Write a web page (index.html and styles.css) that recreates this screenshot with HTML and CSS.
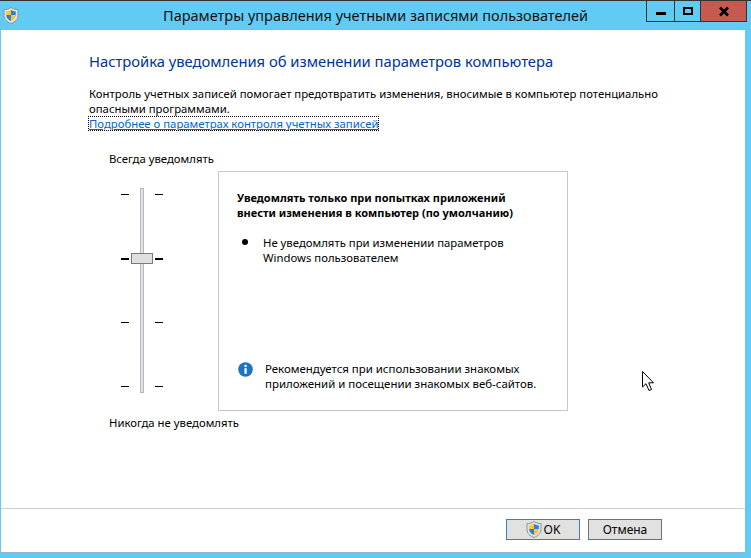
FILE: index.html
```html
<!DOCTYPE html>
<html lang="ru">
<head>
<meta charset="utf-8">
<title>Параметры управления учетными записями пользователей</title>
<link rel="stylesheet" href="styles.css">
</head>
<body>
<svg class="defs" width="0" height="0">
  <defs>
    <symbol id="shield" viewBox="0 0 16 17">
      <path d="M8 .5 C10 2 12.5 2.6 15 2.6 V8.5 C15 12.5 12 15 8 16.5 C4 15 1 12.5 1 8.5 V2.6 C3.5 2.6 6 2 8 .5Z" fill="#dfe3e6" stroke="#8d9499"/>
      <path d="M8 3 C9.5 3.9 11 4.3 12.8 4.4 V8 H8Z" fill="#2f80c8"/>
      <path d="M8 3 C6.5 3.9 5 4.3 3.2 4.4 V8 H8Z" fill="#f6c730"/>
      <path d="M3.2 8 H8 V14 C5.2 13 3.2 11 3.2 8Z" fill="#2f80c8"/>
      <path d="M12.8 8 H8 V14 C10.8 13 12.8 11 12.8 8Z" fill="#f6c730"/>
    </symbol>
  </defs>
</svg>
<div class="window">
  <header class="titlebar">
    <svg class="title-icon"><use href="#shield"/></svg>
    <h1 class="title">Параметры управления учетными записями пользователей</h1>
    <div class="controls">
      <div class="ctl ctl-min"><span class="glyph-min"></span></div>
      <div class="ctl ctl-max"><span class="glyph-max"></span></div>
      <div class="ctl ctl-close"><svg width="14" height="11" viewBox="0 0 14 11"><path d="M3 1.5 L11 9.5 M11 1.5 L3 9.5" stroke="#000" stroke-width="2.6" fill="none"/></svg></div>
    </div>
  </header>
  <div class="client">
    <main class="content">
      <h2 class="heading">Настройка уведомления об изменении параметров компьютера</h2>
      <p class="intro">Контроль учетных записей помогает предотвратить изменения, вносимые в компьютер потенциально опасными программами.</p>
      <a class="link" href="#">Подробнее о параметрах контроля учетных записей</a>
      <div class="label-top">Всегда уведомлять</div>
      <div class="settings">
        <div class="slider">
          <div class="track"></div>
          <div class="ticks">
            <div class="tick-row"><i></i><i></i></div>
            <div class="tick-row sel"><i></i><i></i></div>
            <div class="tick-row"><i></i><i></i></div>
            <div class="tick-row"><i></i><i></i></div>
          </div>
          <div class="thumb"></div>
        </div>
        <section class="panel">
          <div class="panel-title">Уведомлять только при попытках приложений<br>внести изменения в компьютер (по умолчанию)</div>
          <div class="bullet"><span class="dot"></span><span>Не уведомлять при изменении параметров<br>Windows пользователем</span></div>
          <div class="note">
            <svg class="info" width="15" height="15" viewBox="0 0 16 16"><circle cx="8" cy="8" r="7.8" fill="#1a74c4"/><rect x="6.9" y="3" width="2.4" height="2.4" fill="#fff"/><rect x="6.9" y="6.6" width="2.4" height="6" fill="#fff"/></svg>
            <span class="note-text">Рекомендуется при использовании знакомых<br>приложений и посещении знакомых веб-сайтов.</span>
          </div>
        </section>
      </div>
      <div class="label-bottom">Никогда не уведомлять</div>
    </main>
    <footer class="footer">
      <button class="btn btn-default" type="button"><svg class="btn-shield"><use href="#shield"/></svg>OK</button>
      <button class="btn" type="button">Отмена</button>
    </footer>
  </div>
  <svg class="cursor" width="14" height="22" viewBox="0 0 14 22"><path d="M1.5 1.5 V17 L5 13.7 L8 20.5 L10.5 19.5 L7.7 12.8 H12.5Z" fill="#fff" stroke="#000" stroke-width="1"/></svg>
</div>
</body>
</html>
```
FILE: styles.css
```css
* { box-sizing: border-box; }
html, body { margin: 0; padding: 0; }
body { width: 751px; height: 558px; overflow: hidden; font-family: "Noto Sans", "Open Sans", sans-serif; font-size: 11.34px; color: #000; background: #62cbf3; }
.defs { position: absolute; }
.window { position: relative; width: 751px; height: 558px; display: flex; flex-direction: column; background: #62cbf3; border-top: 1px solid #333; }
.titlebar { position: relative; height: 29px; display: flex; align-items: center; justify-content: center; flex: none; border-bottom: 1px solid #8ab8d0; }
.title-icon { position: absolute; left: 3px; top: 6px; width: 16px; height: 17px; }
.title { margin: 0; font-size: 14.5px; font-weight: 400; color: #111; }
.controls { position: absolute; right: 4px; top: 0; display: flex; height: 21px; border: 1px solid #333; border-top: 0; }
.ctl { display: flex; align-items: center; justify-content: center; height: 20px; }
.ctl-min { width: 28px; border-right: 1px solid #333; }
.ctl-max { width: 26px; border-right: 1px solid #333; }
.ctl-close { width: 45px; background: #c75a50; }
.glyph-min { width: 10px; height: 3px; background: #000; margin-top: 5px; }
.glyph-max { width: 10px; height: 8px; border: 2px solid #000; margin-top: -1px; }
.client { width: 744px; height: 523px; margin-left: 1px; background: #fff; display: flex; flex-direction: column; border-bottom: 1px solid #8ab8d0; }
.content { flex: 1; padding: 21px 0 0 88px; }
.heading { margin: 0; font-size: 14.75px; line-height: 20px; font-weight: 400; color: #003399; }
.intro { margin: 15px 0 0; width: 590px; line-height: 15px; }
.link { display: inline-block; line-height: 13px; color: #0066cc; text-decoration: underline; outline: 1px dotted #000; outline-offset: 0; }
.label-top { margin: 20px 0 0 20px; line-height: 15px; }
.settings { display: flex; margin: 5px 0 0 0; height: 240px; }
.slider { position: relative; width: 129px; flex: none; }
.track { position: absolute; left: 51px; top: 17px; width: 4px; height: 205px; background: #e2e2e8; border: 1px solid #b8b8bc; }
.ticks { position: absolute; left: 32px; top: 23px; width: 42px; height: 193px; display: flex; flex-direction: column; justify-content: space-between; }
.tick-row { display: flex; justify-content: space-between; height: 1px; }
.tick-row i { width: 8px; height: 1px; background: #000; }
.tick-row.sel { height: 2px; }
.tick-row.sel i { height: 2px; }
.thumb { position: absolute; left: 42px; top: 82px; width: 22px; height: 11px; background: #dfdfdf; border: 1px solid #7a7a7a; }
.panel { width: 350px; height: 240px; border: 1px solid #c8c8c8; padding: 18px 18px 0; display: flex; flex-direction: column; }
.panel-title { font-weight: 700; font-size: 11px; line-height: 15px; }
.bullet { margin: 15px 0 0 5px; display: flex; align-items: flex-start; gap: 15px; line-height: 15px; }
.dot { width: 6px; height: 6px; margin-top: 4px; border-radius: 50%; background: #000; flex: none; }
.note { margin-top: auto; margin-bottom: 19px; display: flex; gap: 12px; line-height: 15px; margin-left: 1px; }
.note-text { font-size: 11.45px; }
.info { flex: none; margin-top: 1px; }
.label-bottom { margin: 4px 0 0 20px; line-height: 15px; }
.footer { flex: none; height: 44px; border-top: 1px solid #d0d0d0; display: flex; justify-content: flex-end; align-items: flex-start; gap: 8px; padding: 10px 83px 0 0; }
.btn { width: 74px; height: 21px; display: flex; align-items: center; justify-content: center; background: #e1e1e1; border: 1px solid #707070; padding: 0; font: inherit; font-size: 12px; color: #000; }
.btn-default { border-color: #3c7fb1; }
.btn-shield { width: 16px; height: 17px; margin-right: 2px; }
.cursor { position: absolute; left: 641px; top: 369px; }
```
